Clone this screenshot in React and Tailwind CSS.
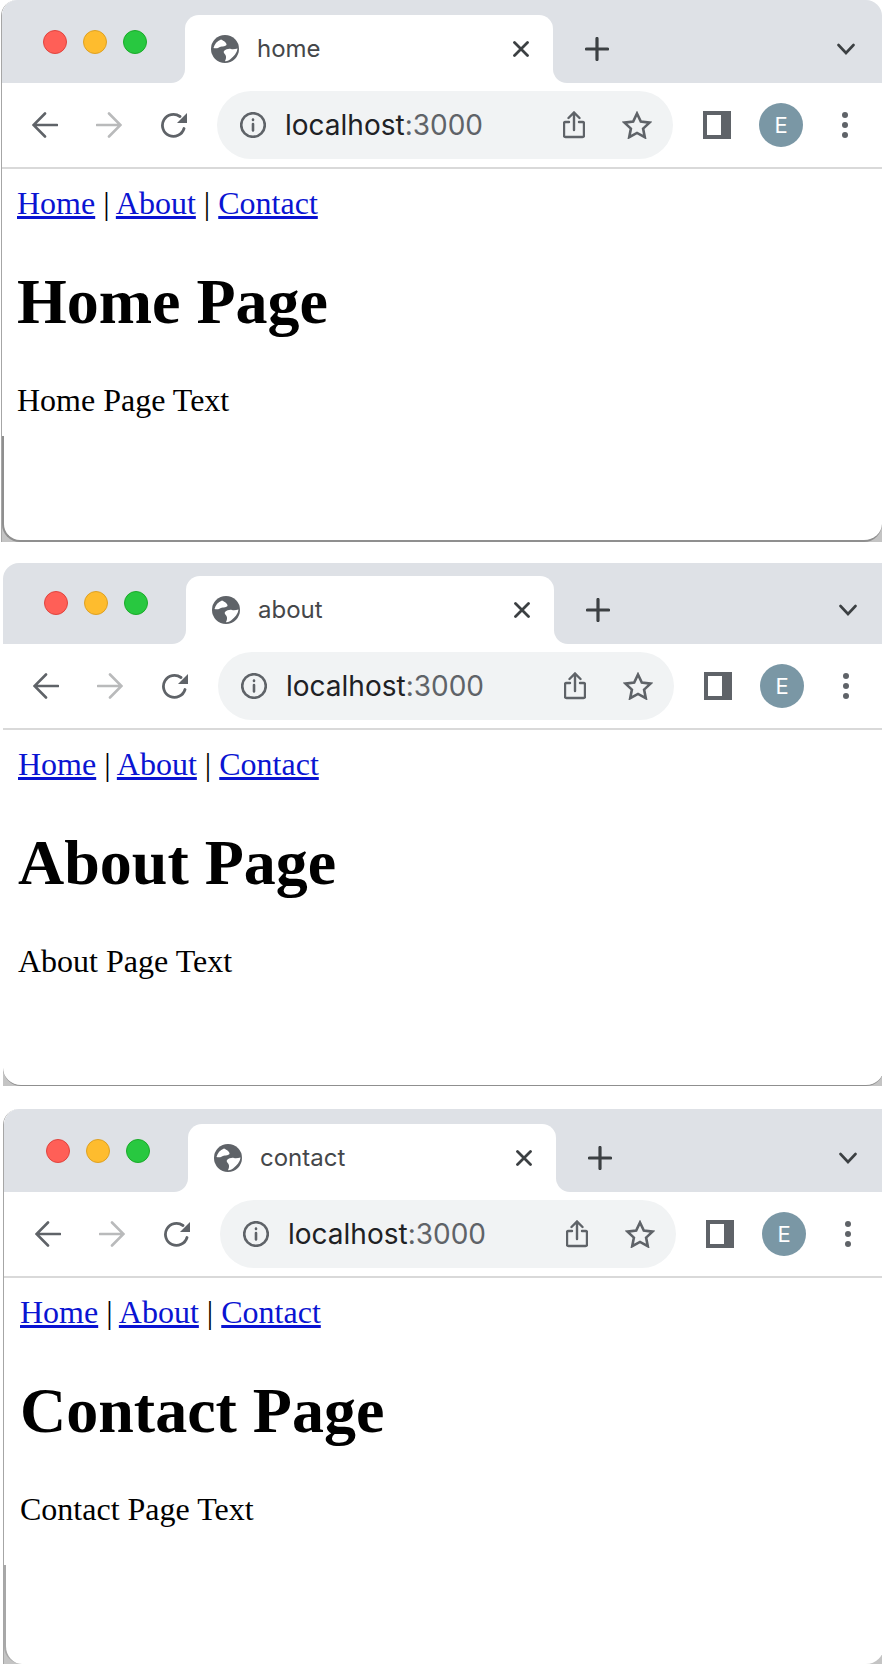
import React from 'react';

const Globe = () => (
    <svg width="28" height="28" viewBox="0 0 28 28" className="shrink-0">
        <circle cx="14" cy="14" r="14" fill="#5f6368" />
        <path d="M2.500 13C3.500 9 6 6 10 4.500 13 6 16 8 15.500 10 14 12 10 11 8 12.500 6 13.500 4 13.500 2.500 13Z" fill="#fff" />
        <path d="M13 16C15 14 18 13.500 20 14 22 14.500 24.500 14 26.500 13.500 26 18 23 21 19 24.500 17 26 15 26.500 14 26 15 24 15.500 22 14.500 20 13.500 18.500 12 17.500 13 16Z" fill="#fff" />
    </svg>
);

const Icon = ({ w = 28, h = 28, vb = '0 0 28 28', stroke = '#5f6368', sw = 2.6, children }) => (
    <svg width={w} height={h} viewBox={vb} fill="none" stroke={stroke} strokeWidth={sw} strokeLinecap="round" className="shrink-0">
        {children}
    </svg>
);

const Window = ({ title, frame, strip, tabGap, lights, toolPad, pagePad, footH, footBorder }) => {
    const name = title.charAt(0).toUpperCase() + title.slice(1);
    return (
        <div className={`${frame} overflow-hidden`}>
            <div className="bg-white">
                <div className={`flex ${strip} bg-white`}>
                    <div className={`${lights} flex gap-[16px] bg-[#dee1e6] rounded-br-[14px]`}>
                        <span className="w-[24px] h-[24px] rounded-full bg-[#ff5f57] border border-[#e0443e]" />
                        <span className="w-[24px] h-[24px] rounded-full bg-[#febc2e] border border-[#dea123]" />
                        <span className="w-[24px] h-[24px] rounded-full bg-[#28c840] border border-[#1aab29]" />
                    </div>
                    <div className={`w-[368px] ${tabGap} bg-[#dee1e6]`}>
                        <div className="h-full bg-white rounded-t-[14px] flex items-start pt-[20px] pl-[26px] pr-[24px]">
                            <Globe />
                            <span className="ml-[18px] text-[24px] leading-[28px] text-[#45474a] font-['Inter',sans-serif]">{title}</span>
                            <span className="ml-auto mt-[6px]">
                                <Icon w={16} h={16} vb="0 0 16 16" stroke="#3c4043" sw={2.800}>
                                    <path d="M1.500 1.500l13 13M14.500 1.500l-13 13" />
                                </Icon>
                            </span>
                        </div>
                    </div>
                    <div className={`flex-1 bg-[#dee1e6] rounded-bl-[14px] flex items-center ${tabGap} pl-[32px] pr-[27px]`}>
                        <Icon w={24} h={24} vb="0 0 24 24" stroke="#3c4043" sw={3.200}>
                            <path d="M12 1.500v21M1.500 12h21" />
                        </Icon>
                        <span className="ml-auto">
                            <Icon w={18} h={12} vb="0 0 18 12" stroke="#3c4043" sw={2.600}>
                                <path d="M1.500 2l7.500 8 7.500-8" />
                            </Icon>
                        </span>
                    </div>
                </div>
                <div className={`h-[84px] flex items-center bg-white ${toolPad}`}>
                    <Icon w={26} h={26} vb="0 0 26 26" sw={2.600}>
                        <path d="M25 13H3M13 1.500L1.500 13 13 24.500" />
                    </Icon>
                    <span className="ml-[38px]">
                        <Icon w={26} h={26} vb="0 0 26 26" stroke="#b9babb" sw={2.600}>
                            <path d="M1 13h22M13 1.500L24.500 13 13 24.500" />
                        </Icon>
                    </span>
                    <span className="ml-[38px]">
                        <Icon w={28} h={28} vb="0 0 28 28" sw={2.800}>
                            <path d="M24 17.500A11 11 0 1 1 20 5.500" />
                            <path d="M17 12h10V2z" fill="#5f6368" stroke="none" />
                        </Icon>
                    </span>
                    <div className="ml-[29px] w-[456px] h-[68px] rounded-full bg-[#f1f3f4] flex items-center pl-[23px] pr-[21px] shrink-0">
                        <Icon w={26} h={26} vb="0 0 26 26" sw={2.600}>
                            <circle cx="13" cy="13" r="11.800" />
                            <path d="M13 12v6.500M13 7.500v.5" />
                        </Icon>
                        <span className="ml-[19px] text-[28px] leading-[34px] text-[#202124] font-['Inter',sans-serif]">
                            localhost<span className="text-[#5f6368]">:3000</span>
                        </span>
                        <span className="ml-auto">
                            <Icon w={22} h={28} vb="0 0 22 28" sw={2.400}>
                                <path d="M6 11H2.500A1.500 1.500 0 0 0 1 12.500v12A1.500 1.500 0 0 0 2.500 26h17a1.500 1.500 0 0 0 1.500-1.500v-12a1.500 1.500 0 0 0-1.500-1.500H16" />
                                <path d="M11 19V2M5.500 7L11 1.500 16.500 7" />
                            </Icon>
                        </span>
                        <span className="ml-[37px]">
                            <Icon w={30} h={28} vb="0 0 30 28" sw={2.600}>
                                <path d="M15 2.500l3.800 8 8.700 1.100-6.400 6 1.700 8.600L15 21.900l-7.800 4.300 1.700-8.600-6.400-6 8.700-1.100z" />
                            </Icon>
                        </span>
                    </div>
                    <div className="ml-[30px] w-[28px] h-[28px] bg-[#5f6368] flex items-center pl-[4px] shrink-0">
                        <div className="w-[14px] h-[20px] bg-white" />
                    </div>
                    <div className="ml-[28px] w-[44px] h-[44px] rounded-full bg-[#7a97a5] flex items-center justify-center text-white text-[22px] font-['Inter',sans-serif] shrink-0">
                        E
                    </div>
                    <div className="ml-[39px] flex flex-col gap-[4px] shrink-0">
                        <span className="w-[6px] h-[6px] rounded-full bg-[#5f6368]" />
                        <span className="w-[6px] h-[6px] rounded-full bg-[#5f6368]" />
                        <span className="w-[6px] h-[6px] rounded-full bg-[#5f6368]" />
                    </div>
                </div>
                <div className="h-[2px] bg-[#d9d9d9]" />
            </div>
            <div className="flex-1 flex flex-col bg-[#c4c4c4]">
                <div className={`flex-1 bg-white ${pagePad} font-['Liberation_Serif',serif] text-black`}>
                    <p className="text-[32px] leading-[37px] mt-[16px]">
                        <a href="#" className="text-[#0a14d2] underline">Home</a> | <a href="#" className="text-[#0a14d2] underline">About</a> | <a href="#" className="text-[#0a14d2] underline">Contact</a>
                    </p>
                    <h1 className="text-[64px] leading-[74px] font-bold mt-[43px]">{name} Page</h1>
                    <p className="text-[32px] leading-[37px] mt-[43px]">{name} Page Text</p>
                </div>
                <div className={`${footH} ${footBorder} bg-white rounded-b-[18px]`} />
            </div>
        </div>
    );
};

export default function App() {
    return (
        <div className="w-[882px] h-[1673px] overflow-hidden bg-white flex flex-col">
            <Window
                title="home"
                frame="ml-[1px] w-[881px] h-[542px] shrink-0 flex flex-col border-l border-[#a6a6a6] rounded-t-[16px]"
                strip="h-[83px]"
                tabGap="pt-[15px]"
                lights="w-[183px] pl-[41px] pt-[30px]"
                toolPad="pl-[30px]"
                pagePad="pl-[15px]"
                footH="h-[106px]"
                footBorder="border-l-2 border-b-2 border-[#8f8f8f]"
            />
            <Window
                title="about"
                frame="ml-[3px] mt-[21px] w-[881px] h-[523px] shrink-0 flex flex-col rounded-tl-[16px]"
                strip="h-[81px]"
                tabGap="pt-[13px]"
                lights="w-[183px] pl-[41px] pt-[28px]"
                toolPad="pl-[30px]"
                pagePad="pl-[15px]"
                footH="h-[60px]"
                footBorder="border-b border-[#8f8f8f]"
            />
            <Window
                title="contact"
                frame="ml-[3px] mt-[23px] w-[881px] h-[555px] shrink-0 flex flex-col border-l border-[#a6a6a6] rounded-tl-[16px]"
                strip="h-[83px]"
                tabGap="pt-[15px]"
                lights="w-[184px] pl-[42px] pt-[30px]"
                toolPad="pl-[31px]"
                pagePad="pl-[16px]"
                footH="h-[99px]"
                footBorder="border-l-2 border-[#a8a8a8]"
            />
        </div>
    );
}
